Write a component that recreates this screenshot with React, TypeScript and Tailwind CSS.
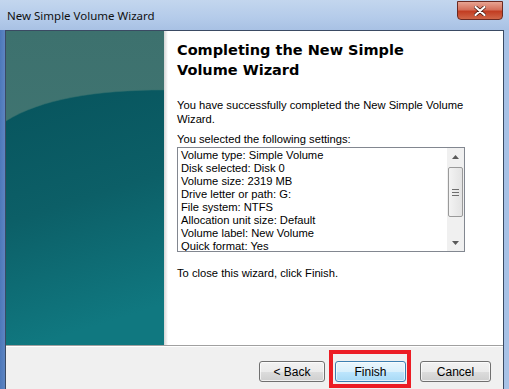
const SETTINGS = [
  "Volume type: Simple Volume",
  "Disk selected: Disk 0",
  "Volume size: 2319 MB",
  "Drive letter or path: G:",
  "File system: NTFS",
  "Allocation unit size: Default",
  "Volume label: New Volume",
  "Quick format: Yes",
];

function SidePanel() {
  return (
    <div className="relative w-[158px] shrink-0">
      <svg width="158" height="314" viewBox="0 0 158 314" className="block">
        <defs>
          <linearGradient id="top" x1="0" y1="0" x2="0" y2="1">
            <stop offset="0" stopColor="#3d716e" />
            <stop offset="1" stopColor="#457b77" />
          </linearGradient>
          <linearGradient id="bottom" x1="0" y1="0" x2="0.2" y2="1">
            <stop offset="0" stopColor="#07545d" />
            <stop offset="0.5" stopColor="#0c5f67" />
            <stop offset="1" stopColor="#107880" />
          </linearGradient>
        </defs>
        <rect width="158" height="314" fill="url(#top)" />
        <path d="M0 90 C 35 68, 90 59, 158 59 L158 314 L0 314 Z" fill="url(#bottom)" />
        <path d="M0 90 C 35 68, 90 59, 158 59" fill="none" stroke="#326f6e" strokeWidth="1" opacity="0.5" />
      </svg>
    </div>
  );
}

function Scrollbar() {
  return (
    <div className="flex w-[17px] shrink-0 flex-col bg-[#f0f0f0]">
      <div className="flex h-[17px] items-center justify-center">
        <svg width="7" height="4" viewBox="0 0 7 4">
          <path d="M0 4 L3.5 0 L7 4 Z" fill="#5a5a5a" />
        </svg>
      </div>
      <div className="mx-[1px] mt-[2px] flex h-[50px] flex-col items-center justify-center gap-[2px] rounded-[2px] border border-[#9a9a9a] bg-[linear-gradient(to_right,#f3f3f3,#e3e3e3)]">
        <div className="h-px w-[7px] bg-[#6e6e6e]" />
        <div className="h-px w-[7px] bg-[#6e6e6e]" />
        <div className="h-px w-[7px] bg-[#6e6e6e]" />
      </div>
      <div className="flex-1" />
      <div className="flex h-[17px] items-center justify-center">
        <svg width="7" height="4" viewBox="0 0 7 4">
          <path d="M0 0 L3.5 4 L7 0 Z" fill="#5a5a5a" />
        </svg>
      </div>
    </div>
  );
}

function Button({ label, primary, narrow }: { label: string; primary?: boolean; narrow?: boolean }) {
  const width = narrow ? "w-[66px]" : "w-[71px]";
  return (
    <div
      className={
        primary
          ? `flex h-[21px] ${width} items-center justify-center rounded-[3px] border border-[#3c7fb1] bg-[linear-gradient(to_bottom,#eaf6fd_0%,#d9f0fc_50%,#bee6fd_51%,#a7d9f5_100%)] shadow-[inset_0_0_0_1px_#ffffffa0]`
          : `flex h-[21px] ${width} items-center justify-center rounded-[3px] border border-[#707070] bg-[linear-gradient(to_bottom,#f2f2f2_0%,#ebebeb_50%,#dddddd_51%,#cfcfcf_100%)] shadow-[inset_0_0_0_1px_#ffffffb0]`
      }
    >
      <span className="text-[12px] text-black">{label}</span>
    </div>
  );
}

export default function App() {
  return (
    <div
      className="flex h-[389px] w-[509px] flex-col overflow-hidden bg-[linear-gradient(to_right,#4d78ba_0%,#7d9fd3_3%,#a9c2e5_20%,#8fb0dc_50%,#a8c2e6_100%)]"
      style={{ fontFamily: '"Liberation Sans", Arial, sans-serif' }}
    >
      <div className="flex h-[30px] shrink-0 items-start justify-between bg-[linear-gradient(to_bottom,#c3d6ee,#b4cbea_60%,#a8c1e4)]">
        <span
          className="mt-[7px] ml-[7px] text-[11.5px] text-[#111]"
          style={{ fontFamily: '"Noto Sans", "Open Sans", sans-serif' }}
        >
          New Simple Volume Wizard
        </span>
        <div className="mt-[1px] mr-[6px] flex h-[19px] w-[46px] items-center justify-center rounded-b-[4px] border border-[#6b2a22] bg-[linear-gradient(to_bottom,#e8a493_0%,#d5705b_45%,#c23d22_55%,#d06648_100%)]">
          <svg width="12" height="10" viewBox="0 0 12 10">
            <path d="M1.5 1 L10.5 9 M10.5 1 L1.5 9" stroke="#4a1a12" strokeWidth="3.6" strokeLinecap="round" />
            <path d="M1.5 1 L10.5 9 M10.5 1 L1.5 9" stroke="#ffffff" strokeWidth="2.2" strokeLinecap="round" />
          </svg>
        </div>
      </div>

      <div className="ml-[5px] mr-[5px] flex flex-1 flex-col border-t border-r border-l border-[#3a4a63] bg-[#f0f0f0]">
        <div className="flex h-[314px] shrink-0">
          <SidePanel />
          <div className="w-[4px] shrink-0 bg-[linear-gradient(to_right,#d4d4d4,#ffffff)]" />
          <div className="flex flex-1 flex-col bg-white pt-[9px] pl-[9px]">
            <h1
              className="text-[14.5px] leading-[20px] font-bold text-black"
              style={{ fontFamily: '"DejaVu Sans", Verdana, sans-serif' }}
            >
              Completing the New Simple
              <br />
              Volume Wizard
            </h1>
            <p className="mt-[18px] w-[290px] text-[11.2px] leading-[14px] text-black">
              You have successfully completed the New Simple Volume Wizard.
            </p>
            <p className="mt-[6px] text-[11.2px] leading-[14px] text-black">
              You selected the following settings:
            </p>
            <div className="mt-[1px] flex h-[105px] w-[288px] border border-[#828790] bg-white">
              <div className="flex-1 overflow-hidden pt-[1px] pl-[3px]">
                {SETTINGS.map((s) => (
                  <div key={s} className="h-[13px] text-[11.2px] leading-[13px] whitespace-nowrap text-black">
                    {s}
                  </div>
                ))}
              </div>
              <Scrollbar />
            </div>
            <p className="mt-[14px] text-[11.2px] leading-[14px] text-black">
              To close this wizard, click Finish.
            </p>
          </div>
        </div>
        <div className="h-px shrink-0 bg-[#a0a0a0]" />
        <div className="h-px shrink-0 bg-white" />
        <div className="flex flex-1 items-start justify-end pt-[14px] pr-[12px]">
          <Button label="< Back" narrow />
          <div className="relative ml-[10px]">
            <Button label="Finish" primary />
            <div className="absolute -top-[11px] -right-[5px] -bottom-[6px] -left-[6px] border-4 border-[#ec1c24]" />
          </div>
          <div className="ml-[14px]">
            <Button label="Cancel" />
          </div>
        </div>
      </div>
    </div>
  );
}
